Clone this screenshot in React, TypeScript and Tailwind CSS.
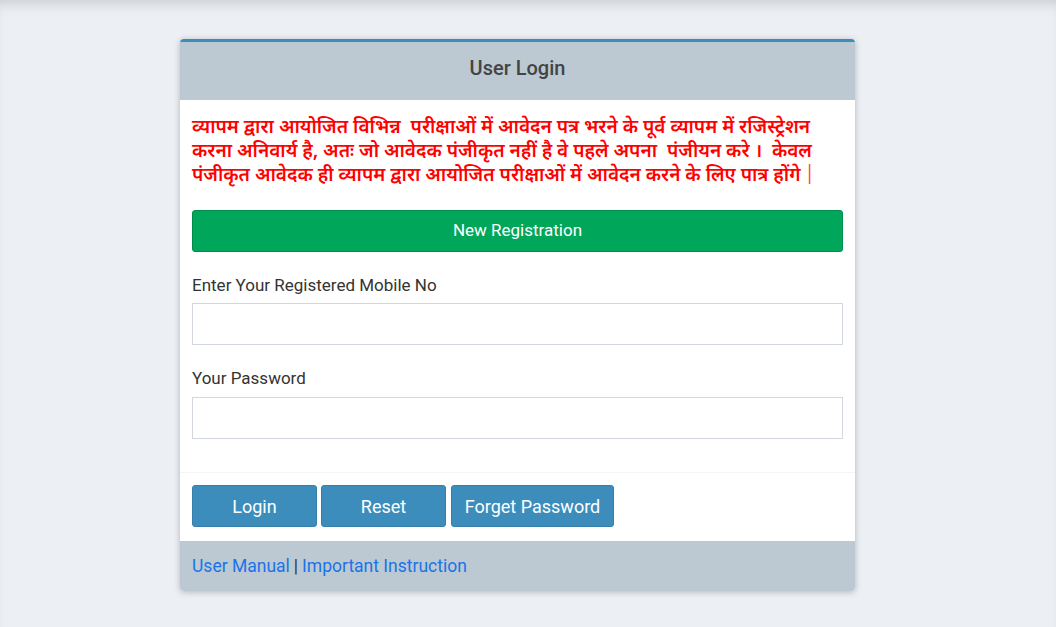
export default function App() {
  return (
    <div className="min-h-screen bg-[#ecf0f5] shadow-[inset_0_10px_14px_-8px_rgba(0,0,0,0.18)] pt-[39px] font-['Roboto',sans-serif]">
      <div className="ml-[180px] w-[675px] rounded-[4px] border-t-[3px] border-[#3c8dbc] bg-white shadow-[0_1px_6px_rgba(0,0,0,0.25)]">
        <div className="flex h-[58px] items-center justify-center bg-[#bcc9d2] pb-[6px] text-[20px] font-medium text-[#444]">
          User Login
        </div>

        <div className="px-3 pb-[33px] pt-[17px]">
          <p className="text-[19px] font-semibold leading-[24px] text-[#ff0000] font-['Noto_Sans_Devanagari','Noto_Sans','Lohit_Devanagari',sans-serif]">
            व्यापम द्वारा आयोजित विभिन्न&nbsp; परीक्षाओं में आवेदन पत्र भरने के पूर्व व्यापम में रजिस्ट्रेशन करना अनिवार्य है, अतः जो आवेदक पंजीकृत नहीं है वे पहले अपना&nbsp; पंजीयन करे ।&nbsp; केवल पंजीकृत आवेदक ही व्यापम द्वारा आयोजित परीक्षाओं में आवेदन करने के लिए पात्र होंगे
            <span className="ml-[4px] inline-block font-normal text-[#ff4d1a]">|</span>
          </p>

          <button className="mt-[21px] flex h-[42px] w-full items-center justify-center rounded-[3px] border border-[#008d4c] bg-[#00a65a] text-[17px] text-white">
            New Registration
          </button>

          <label className="mt-[21px] block text-[17px] leading-[24px] text-[#333]">
            Enter Your Registered Mobile No
          </label>
          <input className="mt-[6px] block h-[42px] w-full border border-[#d2d6de] px-3 outline-none" />

          <label className="mt-[21px] block text-[17px] leading-[24px] text-[#333]">Your Password</label>
          <input type="password" className="mt-[7px] block h-[42px] w-full border border-[#d2d6de] px-3 outline-none" />
        </div>

        <div className="flex gap-[4px] border-t border-[#f4f4f4] px-3 pb-[14px] pt-[12px]">
          <button className="h-[42px] w-[125px] rounded-[3px] border border-[#367fa9] bg-[#3c8dbc] text-[18px] text-white">
            Login
          </button>
          <button className="h-[42px] w-[125px] rounded-[3px] border border-[#367fa9] bg-[#3c8dbc] text-[18px] text-white">
            Reset
          </button>
          <button className="ml-[1px] h-[42px] w-[163px] rounded-[3px] border border-[#367fa9] bg-[#3c8dbc] text-[18px] text-white">
            Forget Password
          </button>
        </div>

        <div className="flex h-[50px] items-center rounded-b-[4px] bg-[#bcc9d2] px-3 text-[17.5px] text-[#333]">
          <a className="text-[#1a73e8]">User Manual</a>
          <span className="mx-[4px]">|</span>
          <a className="text-[#1a73e8]">Important Instruction</a>
        </div>
      </div>
    </div>
  );
}
